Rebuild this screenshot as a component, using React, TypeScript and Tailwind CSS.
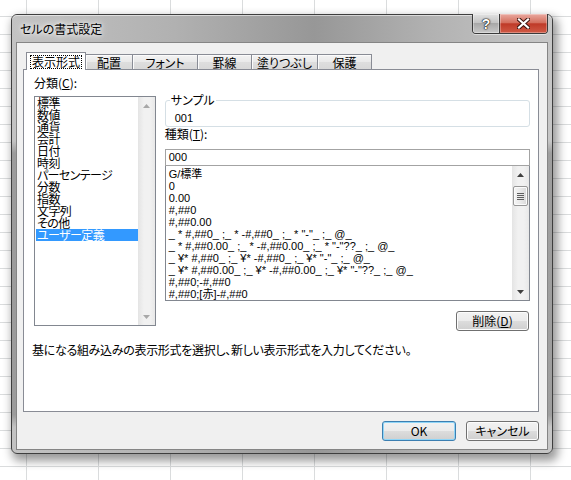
const jp = "font-['Noto_Sans_CJK_JP',sans-serif] [font-feature-settings:'palt']";
const mono = "font-['Liberation_Sans','Noto_Sans_CJK_JP',sans-serif]";

const categories = [
  '標準',
  '数値',
  '通貨',
  '会計',
  '日付',
  '時刻',
  'パーセンテージ',
  '分数',
  '指数',
  '文字列',
  'その他',
  'ユーザー定義',
];

const formats = [
  'G/標準',
  '0',
  '0.00',
  '#,##0',
  '#,##0.00',
  '_ * #,##0_ ;_ * -#,##0_ ;_ * "-"_ ;_ @_',
  '_ * #,##0.00_ ;_ * -#,##0.00_ ;_ * "-"??_ ;_ @_',
  '_ ¥* #,##0_ ;_ ¥* -#,##0_ ;_ ¥* "-"_ ;_ @_',
  '_ ¥* #,##0.00_ ;_ ¥* -#,##0.00_ ;_ ¥* "-"??_ ;_ @_',
  '#,##0;-#,##0',
  '#,##0;[赤]-#,##0',
];

const tabs = [
  { label: '配置', w: 'w-[47px]' },
  { label: 'フォント', w: 'w-[65px]' },
  { label: '罫線', w: 'w-[54px]' },
  { label: '塗りつぶし', w: 'w-[66px]' },
  { label: '保護', w: 'w-[54px]' },
];

function Arrow({ dir, color }: { dir: 'up' | 'down'; color: string }) {
  return (
    <svg width="7" height="4" viewBox="0 0 7 4">
      <path d={dir === 'up' ? 'M0 4L3.5 0L7 4Z' : 'M0 0L3.5 4L7 0Z'} fill={color} />
    </svg>
  );
}

function ScrollBar({ disabled }: { disabled?: boolean }) {
  const c = disabled ? '#a8a8a8' : '#404040';
  return (
    <div className="w-[17px] h-full flex flex-col bg-[linear-gradient(to_right,#e4e4e4,#f1f1f1_35%,#f1f1f1_70%,#e8e8e8)]">
      <div className="h-[17px] flex items-center justify-center">
        <Arrow dir="up" color={c} />
      </div>
      <div className="flex-1 flex flex-col items-center">
        {!disabled && (
          <div className="mt-[3px] w-[15px] h-[20px] rounded-[2px] border border-[#979797] bg-[linear-gradient(to_right,#f5f5f5,#e9e9e9_50%,#d9d9d9)] shadow-[inset_0_0_0_1px_#fbfbfb] flex flex-col items-center justify-center gap-[1px]">
            <div className="w-[7px] h-px bg-[#5e5e5e]" />
            <div className="w-[7px] h-px bg-[#5e5e5e]" />
            <div className="w-[7px] h-px bg-[#5e5e5e]" />
            <div className="w-[7px] h-px bg-[#5e5e5e]" />
          </div>
        )}
      </div>
      <div className="h-[17px] flex items-center justify-center">
        <Arrow dir="down" color={c} />
      </div>
    </div>
  );
}

function Button({ children, primary, w }: { children: React.ReactNode; primary?: boolean; w: string }) {
  return (
    <div
      className={`${w} h-[20px] rounded-[3px] border flex items-center justify-center text-[12px] leading-[12px] text-black bg-[linear-gradient(to_bottom,#f2f2f2_0%,#ebebeb_50%,#dddddd_50%,#cfcfcf_100%)] ${
        primary
          ? 'border-[#3c7fb1] shadow-[inset_0_0_0_1px_#8fd5f7]'
          : 'border-[#707070] shadow-[inset_0_0_0_1px_#fcfcfc]'
      }`}
    >
      {children}
    </div>
  );
}

function Dialog() {
  return (
    <div className="w-[542px] h-[440px] flex flex-col rounded-[6px] border border-[#3e3e3e] shadow-[3px_5px_10px_2px_rgba(0,0,0,0.4)] bg-[linear-gradient(to_bottom,transparent_126px,rgba(0,0,0,0.2)_138px,rgba(0,0,0,0.2)_400px,transparent_412px),linear-gradient(to_right,#c3c3c3_0%,#b1b1b1_30%,#979797_56%,#b2b2b2_78%,#c7c7c7_100%)]">
      {/* title bar */}
      <div className="h-[27px] flex items-start shadow-[inset_0_1px_0_rgba(255,255,255,0.55)] rounded-t-[5px]">
        <div className={`${jp} h-full pl-[8px] pt-[1px] flex items-center text-[12px] text-black [text-shadow:0_0_8px_#fff,0_0_4px_#fff]`}>
          セルの書式設定
        </div>
        <div className="ml-auto mr-[4px] -mt-px flex h-[20px] rounded-b-[4px] border border-t-0 border-[#3b3b3b] overflow-hidden shadow-[0_1px_0_rgba(255,255,255,0.5)]">
          <div className="w-[27px] h-full border-r border-[#3b3b3b] bg-[linear-gradient(to_bottom,#e2e2e2,#c4c4c4_45%,#a8a8a8_50%,#c8c8c8)] shadow-[inset_0_0_0_1px_rgba(255,255,255,0.35)] flex items-center justify-center font-['Liberation_Sans',sans-serif] font-bold text-[14px] leading-none text-white [text-shadow:0_0_1px_#000,0_0_1px_#000,0_0_2px_#222]">
            ?
          </div>
          <div className="w-[47px] h-full bg-[linear-gradient(to_bottom,#eaa9a0,#d4705f_45%,#bf3a28_52%,#d05a46)] shadow-[inset_0_0_0_1px_rgba(255,255,255,0.3)] flex items-center justify-center">
            <svg width="13" height="11" viewBox="0 0 13 11">
              <path d="M2 1.5L11 9.5M11 1.5L2 9.5" stroke="#3d1510" strokeWidth="4.2" strokeLinecap="square" />
              <path d="M2 1.5L11 9.5M11 1.5L2 9.5" stroke="#ffffff" strokeWidth="2.2" strokeLinecap="square" />
            </svg>
          </div>
        </div>
      </div>

      {/* client area */}
      <div className={`${jp} mx-[4px] mb-[3px] flex-1 border border-[#858585] bg-[#f0f0f0] flex flex-col pt-[9px] pl-[6px] pr-[8px] pb-[8px] text-black`}>
        {/* tabs */}
        <div className="relative z-10 -mb-px h-[18px] flex items-end">
          <div className="ml-[3px] w-[60px] h-[18px] bg-white border border-b-0 border-[#898c95] flex items-center justify-center">
            <div className="border border-dotted border-black px-[1px] h-[14px] flex items-center text-[12px] leading-[12px]">
              表示形式
            </div>
          </div>
          {tabs.map((t) => (
            <div
              key={t.label}
              className={`${t.w} h-[15px] mb-px pt-px border-t border-r border-[#898c95] bg-[linear-gradient(to_bottom,#f3f3f3,#e9e9e9_50%,#dedede_50%,#d8d8d8)] shadow-[inset_1px_1px_0_#fbfbfb] flex items-center justify-center text-[12px] leading-[12px]`}
            >
              {t.label}
            </div>
          ))}
        </div>

        {/* panel */}
        <div className="h-[343px] border border-[#898c95] bg-white flex flex-col px-[8px] pt-[7px]">
          <div className="flex">
            {/* left column */}
            <div className="ml-[2px] w-[122px] flex flex-col">
              <div className="h-[12px] text-[12px] leading-[12px]">
                分類(<span className="underline underline-offset-1">C</span>):
              </div>
              <div className="mt-[7px] h-[230px] border border-[#828790] flex">
                <div className="flex-1 pl-[1px] flex flex-col">
                  {categories.map((c, i) => (
                    <div
                      key={c}
                      className={`h-[12px] pl-[1px] text-[12px] leading-[12px] tracking-[-0.6px] whitespace-nowrap ${
                        i === categories.length - 1 ? 'bg-[#3399ff] text-white' : ''
                      }`}
                    >
                      {c}
                    </div>
                  ))}
                </div>
                <ScrollBar disabled />
              </div>
            </div>

            {/* right column */}
            <div className="ml-[9px] w-[366px] flex flex-col">
              <fieldset className="mt-[17px] border border-[#d5dfe5] rounded-[3px] pl-[4px] pt-[6px] pb-[2px]">
                <legend className="px-[1px] text-[12px] leading-[12px]">サンプル</legend>
                <div className={`${mono} pl-[5px] h-[12px] text-[11px] leading-[12px]`}>001</div>
              </fieldset>
              <div className="mt-[1px] h-[12px] text-[12px] leading-[12px]">
                種類(<span className="underline underline-offset-1">T</span>):
              </div>
              <div className={`${mono} mt-[9px] h-[17px] border border-[#a3a3a3] pl-[3px] flex items-center text-[11px]`}>
                000
              </div>
              <div className="h-[135px] border border-t-0 border-[#828790] flex">
                <div className={`${mono} flex-1 min-w-0 pt-[2px] pl-[3px] overflow-hidden flex flex-col`}>
                  {formats.map((f) => (
                    <div key={f} className="h-[12px] text-[11px] leading-[12px] whitespace-pre">
                      {f}
                    </div>
                  ))}
                </div>
                <ScrollBar />
              </div>
              <div className="mt-[10px] self-end mr-[1px]">
                <Button w="w-[73px]">
                  削除(<span className="underline underline-offset-1">D</span>)
                </Button>
              </div>
            </div>
          </div>

          <div className="mt-[13px] h-[12px] text-[12px] leading-[12px] tracking-[-0.3px] whitespace-nowrap">
            基になる組み込みの表示形式を選択し、新しい表示形式を入力してください。
          </div>
        </div>

        {/* footer */}
        <div className="mt-[9px] flex justify-end gap-[10px]">
          <Button primary w="w-[74px]">
            OK
          </Button>
          <Button w="w-[73px]">キャンセル</Button>
        </div>
      </div>
    </div>
  );
}

export default function App() {
  return (
    <div className="w-[571px] h-[480px] overflow-hidden bg-white bg-[linear-gradient(to_right,#dadcdd_1px,transparent_1px),linear-gradient(to_bottom,#dadcdd_1px,transparent_1px)] bg-[size:72px_18px] bg-[position:26px_16px] pl-[11px] pt-[14px]">
      <Dialog />
    </div>
  );
}
